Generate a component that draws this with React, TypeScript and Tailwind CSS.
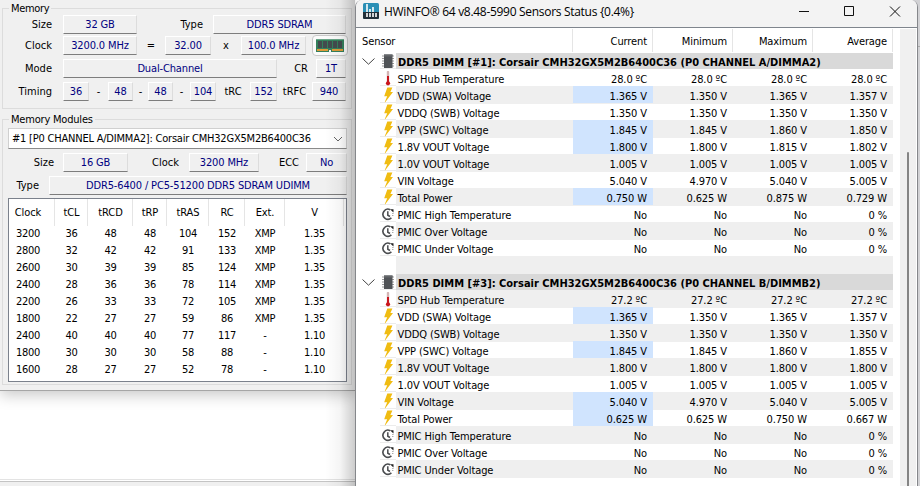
import type { ReactNode } from "react";

const timings = [
    ["3200", "36", "48", "48", "104", "152", "XMP", "1.35"],
    ["2800", "32", "42", "42", "91", "133", "XMP", "1.35"],
    ["2600", "30", "39", "39", "85", "124", "XMP", "1.35"],
    ["2400", "28", "36", "36", "78", "114", "XMP", "1.35"],
    ["2200", "26", "33", "33", "72", "105", "XMP", "1.35"],
    ["1800", "22", "27", "27", "59", "86", "XMP", "1.35"],
    ["2400", "40", "40", "40", "77", "117", "-", "1.10"],
    ["1800", "30", "30", "30", "58", "88", "-", "1.10"],
    ["1600", "28", "27", "27", "52", "78", "-", "1.10"],
];

const timingCols = "grid grid-cols-[46px_33px_45px_34px_42px_36px_40px_59px]";

type Sensor = {
    kind: "group" | "temp" | "volt" | "clock" | "blank";
    name: string;
    values?: string[];
    changed?: boolean;
};

const sensors: Sensor[] = [
    { kind: "group", name: "DDR5 DIMM [#1]: Corsair CMH32GX5M2B6400C36 (P0 CHANNEL A/DIMMA2)" },
    { kind: "temp", name: "SPD Hub Temperature", values: ["28.0 ºC", "28.0 ºC", "28.0 ºC", "28.0 ºC"] },
    { kind: "volt", name: "VDD (SWA) Voltage", values: ["1.365 V", "1.350 V", "1.365 V", "1.357 V"], changed: true },
    { kind: "volt", name: "VDDQ (SWB) Voltage", values: ["1.350 V", "1.350 V", "1.350 V", "1.350 V"] },
    { kind: "volt", name: "VPP (SWC) Voltage", values: ["1.845 V", "1.845 V", "1.860 V", "1.850 V"], changed: true },
    { kind: "volt", name: "1.8V VOUT Voltage", values: ["1.800 V", "1.800 V", "1.815 V", "1.802 V"], changed: true },
    { kind: "volt", name: "1.0V VOUT Voltage", values: ["1.005 V", "1.005 V", "1.005 V", "1.005 V"] },
    { kind: "volt", name: "VIN Voltage", values: ["5.040 V", "4.970 V", "5.040 V", "5.005 V"] },
    { kind: "volt", name: "Total Power", values: ["0.750 W", "0.625 W", "0.875 W", "0.729 W"], changed: true },
    { kind: "clock", name: "PMIC High Temperature", values: ["No", "No", "No", "0 %"] },
    { kind: "clock", name: "PMIC Over Voltage", values: ["No", "No", "No", "0 %"] },
    { kind: "clock", name: "PMIC Under Voltage", values: ["No", "No", "No", "0 %"] },
    { kind: "blank", name: "" },
    { kind: "group", name: "DDR5 DIMM [#3]: Corsair CMH32GX5M2B6400C36 (P0 CHANNEL B/DIMMB2)" },
    { kind: "temp", name: "SPD Hub Temperature", values: ["27.2 ºC", "27.2 ºC", "27.2 ºC", "27.2 ºC"] },
    { kind: "volt", name: "VDD (SWA) Voltage", values: ["1.365 V", "1.350 V", "1.365 V", "1.357 V"], changed: true },
    { kind: "volt", name: "VDDQ (SWB) Voltage", values: ["1.350 V", "1.350 V", "1.350 V", "1.350 V"] },
    { kind: "volt", name: "VPP (SWC) Voltage", values: ["1.845 V", "1.845 V", "1.860 V", "1.855 V"], changed: true },
    { kind: "volt", name: "1.8V VOUT Voltage", values: ["1.800 V", "1.800 V", "1.800 V", "1.800 V"] },
    { kind: "volt", name: "1.0V VOUT Voltage", values: ["1.005 V", "1.005 V", "1.005 V", "1.005 V"] },
    { kind: "volt", name: "VIN Voltage", values: ["5.040 V", "4.970 V", "5.040 V", "5.005 V"], changed: true },
    { kind: "volt", name: "Total Power", values: ["0.625 W", "0.625 W", "0.750 W", "0.667 W"], changed: true },
    { kind: "clock", name: "PMIC High Temperature", values: ["No", "No", "No", "0 %"] },
    { kind: "clock", name: "PMIC Over Voltage", values: ["No", "No", "No", "0 %"] },
    { kind: "clock", name: "PMIC Under Voltage", values: ["No", "No", "No", "0 %"] },
];

const Field = ({ className, children }: { className: string; children: ReactNode }) => (
    <div className={`h-[19px] shrink-0 border border-t-white border-l-white border-r-[#dcdcdc] border-b-[#7d7d7d] text-center leading-[17px] tracking-[-0.14px] text-[#000080] ${className}`}>
        {children}
    </div>
);

const Label = ({ className, children }: { className: string; children: ReactNode }) => (
    <div className={`shrink-0 leading-[20px] ${className}`}>{children}</div>
);

const RamIcon = () => (
    <svg width="28" height="15" viewBox="0 0 28 15">
        <path d="M0 1h28v13H0z" fill="#34805c" />
        <path d="M0 1h28v1H0z" fill="#69a688" />
        <path d="M2 3h4v7H2zM7 3h4v7H7zM12 3h4v7h-4zM17 3h4v7h-4zM22 3h4v7h-4z" fill="#434b4e" />
        <path d="M1 11h11v2H1zM16 11h11v2H16z" fill="#dd9a38" />
        <path d="M13 12h2v3h-2z" fill="#f4f4f4" />
    </svg>
);

const ChipIcon = () => (
    <svg width="12" height="15" viewBox="0 0 12 15">
        <path d="M0 2h12M0 4.5h12M0 7h12M0 9.5h12M0 12h12" stroke="#999" />
        <path d="M2 0.5h8.5v13.5H2z" fill="#505357" />
        <path d="M2 0.5h8.5v2H2z" fill="#64676a" />
    </svg>
);

const TempIcon = () => (
    <svg width="6" height="15" viewBox="0 0 6 15">
        <path d="M3 1v11" stroke="#d3b4b4" strokeWidth="2.4" strokeLinecap="round" />
        <path d="M3 5v7" stroke="#c9161d" strokeWidth="2" />
        <circle cx="3" cy="12.3" r="2.1" fill="#c9161d" />
    </svg>
);

const BoltIcon = () => (
    <svg width="9" height="16" viewBox="0 0 9 16">
        <path d="M3.3 0.5H8.4L6.4 5H9L1.2 15.3H0.7L3.2 9.2H0.2z" fill="#f0bc12" />
    </svg>
);

const ClockIcon = () => (
    <svg width="12" height="13" viewBox="0 0 12 13" fill="none">
        <path d="M8.2 1.7A5 5 0 1 0 9.4 9.9" stroke="#4b4d50" strokeWidth="1.6" />
        <path d="M5.8 3.2v4l2.2 1.3" stroke="#4b4d50" strokeWidth="1.5" />
        <path d="M8 1.3h3.5v3.2z" fill="#222" />
        <path d="M10.9 5v.9M10.8 7v.9" stroke="#777" />
    </svg>
);

const icons = {
    group: <ChipIcon />,
    temp: <TempIcon />,
    volt: <BoltIcon />,
    clock: <ClockIcon />,
    blank: null,
};

const SensorRow = ({ row, shaded }: { row: Sensor; shaded: boolean }) => {
    const group = row.kind === "group";
    return (
        <div className="flex h-[17px]">
            <div className="flex w-[24px] shrink-0 items-center justify-center pt-px pl-px">
                {group && (
                    <svg width="13" height="7" viewBox="0 0 13 7" fill="none">
                        <path d="M0.5 0.5l6 5.7 6-5.7" stroke="#444" />
                    </svg>
                )}
            </div>
            <div className={`flex w-[16px] shrink-0 items-center justify-center pt-[2px] ${row.kind === "blank" ? "" : "border-b border-[#ececec]"}`}>
                {icons[row.kind]}
            </div>
            {group ? (
                <div className="mt-px h-[16px] w-[497px] bg-[#d9d9d9] pl-[2px] leading-[20px] font-bold whitespace-nowrap">{row.name}</div>
            ) : (
                <div className={`flex h-[18px] w-[497px] leading-[22px] tracking-[-0.1px] ${shaded ? "bg-[#efefef]" : ""}`}>
                    <div className="w-[177px] pl-[1.5px]">{row.name}</div>
                    {row.values?.map((value, i) => (
                        <div key={i} className={`h-[17px] w-[80px] pr-[6px] text-right ${i === 0 && row.changed ? "bg-[#d0e4fe]" : ""}`}>
                            {value}
                        </div>
                    ))}
                </div>
            )}
        </div>
    );
};

const MemoryWindow = () => (
    <div className="absolute top-0 left-0 h-[391px] w-[356px] border-b border-[#a6a6a6] bg-[#f0f0f0] pt-[2px] pl-[2px] shadow-[0_4px_14px_rgba(0,0,0,0.22)]">
        {/* Memory */}
        <fieldset className="h-[107px] w-[350px] border border-[#dcdcdc]">
            <legend className="ml-[6px] h-[12px] px-[2px] leading-[13px] tracking-[-0.35px]">Memory</legend>
            <div className="flex flex-col gap-[4px] pt-px">
                <div className="flex h-[19px]">
                    <Label className="w-[60px] pr-[11px] text-right">Size</Label>
                    <Field className="w-[74px]">32 GB</Field>
                    <Label className="w-[76px] pr-[10px] text-right">Type</Label>
                    <Field className="w-[133px]">DDR5 SDRAM</Field>
                </div>
                <div className="-mt-[2px] flex h-[19px]">
                    <Label className="w-[60px] pr-[11px] text-right">Clock</Label>
                    <Field className="w-[74px]">3200.0 MHz</Field>
                    <Label className="w-[28px] text-center">=</Label>
                    <Field className="w-[46px]">32.00</Field>
                    <Label className="w-[30px] text-center">x</Label>
                    <Field className="w-[65px]">100.0 MHz</Field>
                    <div className="-mt-px ml-[6px] flex h-[21px] w-[36px] items-center justify-center rounded-[4px] border border-[#c9c9c9] bg-[#fbfbfb]">
                        <RamIcon />
                    </div>
                </div>
                <div className="flex h-[19px]">
                    <Label className="w-[60px] pr-[11px] text-right">Mode</Label>
                    <Field className="w-[214px]">Dual-Channel</Field>
                    <Label className="w-[39px] pr-[8px] text-right">CR</Label>
                    <Field className="w-[30px]">1T</Field>
                </div>
                <div className="flex h-[19px]">
                    <Label className="w-[60px] pr-[11px] text-right">Timing</Label>
                    <Field className="w-[26px]">36</Field>
                    <Label className="w-[19px] text-center">-</Label>
                    <Field className="w-[25px]">48</Field>
                    <Label className="w-[15px] text-center">-</Label>
                    <Field className="w-[25px]">48</Field>
                    <Label className="w-[17px] text-center">-</Label>
                    <Field className="w-[26px]">104</Field>
                    <Label className="w-[34px] text-center">tRC</Label>
                    <Field className="w-[27px]">152</Field>
                    <Label className="w-[35px] text-center">tRFC</Label>
                    <Field className="w-[34px]">940</Field>
                </div>
            </div>
        </fieldset>

        {/* Memory Modules */}
        <fieldset className="mt-[4px] h-[272px] w-[350px] border border-[#dcdcdc]">
            <legend className="ml-[6px] h-[12px] px-[2px] leading-[13px] tracking-[-0.2px]">Memory Modules</legend>
            <div className="pl-[5px]">
                <div className="mt-[3px] flex h-[21px] w-[339px] items-center justify-between border border-[#d0d0d0] border-b-[#8a8a8a] bg-white pr-[3px] pl-[3px]">
                    <span className="pt-[2px] tracking-[-0.21px]">#1 [P0 CHANNEL A/DIMMA2]: Corsair CMH32GX5M2B6400C36</span>
                    <svg width="10" height="6" viewBox="0 0 10 6" fill="none">
                        <path d="M1 1l4 4 4-4" stroke="#666" />
                    </svg>
                </div>
                <div className="mt-[4px] flex h-[19px]">
                    <Label className="w-[55px] pr-[9px] text-right">Size</Label>
                    <Field className="w-[65px]">16 GB</Field>
                    <Label className="w-[61px] pr-[10px] text-right">Clock</Label>
                    <Field className="w-[70px]">3200 MHz</Field>
                    <Label className="w-[47px] pr-[7px] text-right">ECC</Label>
                    <Field className="w-[41px]">No</Field>
                </div>
                <div className="mt-[4px] flex h-[19px]">
                    <Label className="w-[41px] pr-[10px] text-right">Type</Label>
                    <Field className="w-[298px]">DDR5-6400 / PC5-51200 DDR5 SDRAM UDIMM</Field>
                </div>
                <div className="mt-[3px] h-[184px] w-[339px] border border-[#7b818c] bg-white">
                    <div className={`${timingCols} h-[26px] text-center leading-[27px] tracking-[-0.1px]`}>
                        {["Clock", "tCL", "tRCD", "tRP", "tRAS", "RC", "Ext.", "V"].map((head) => (
                            <div key={head} className="border-r border-[#e5e5e5] pl-[1px] first:pr-[7px] first:pl-0">
                                {head}
                            </div>
                        ))}
                    </div>
                    {timings.map((row, r) => (
                        <div key={r} className={`${timingCols} h-[17px] text-center leading-[18px] tracking-[-0.3px]`}>
                            {row.map((cell, c) => (
                                <div key={c} className="first:pr-[8px]">{cell}</div>
                            ))}
                        </div>
                    ))}
                </div>
            </div>
        </fieldset>
    </div>
);

const SensorsWindow = () => (
    <div className="absolute top-0 left-[355px] h-[500px] w-[563px] overflow-hidden rounded-t-[7px] border-x border-[#85878b] bg-white">
        {/* Title bar */}
        <div className="flex h-[27px] items-start bg-[#f3f3f3] pt-[3px] pl-[7px]">
            <svg width="16" height="16" viewBox="0 0 16 16" className="shrink-0">
                <rect width="16" height="16" rx="1.5" fill="#2b8fb5" />
                <path d="M0 9h16v5.5a1.5 1.5 0 0 1-1.5 1.5h-13A1.5 1.5 0 0 1 0 14.500z" fill="#22303a" />
                <path d="M4 1v8M7 6v3M10 4v5" stroke="#fff" strokeWidth="1.6" />
                <path d="M4 10v4M7 10v4M10 10v4M13 10v4" stroke="#fff" strokeWidth="1.6" />
            </svg>
            <div className="ml-[5px] font-['Open_Sans',sans-serif] text-[12px] leading-[18px] tracking-[-0.3px] whitespace-nowrap">HWiNFO® 64 v8.48-5990 Sensors Status {"{0.4%}"}</div>
            <svg width="102" height="12" viewBox="0 0 102 12" fill="none" stroke="#111" className="mt-[2px] mr-[16px] ml-auto shrink-0">
                <path d="M0 6.500h10M45.500 1.500h9v9h-9zM91 1.500l10 10M101 1.500l-10 10" />
            </svg>
        </div>
        <div className="flex border-t border-[#7f858d]">
            <div className="w-[537px]">
                <div className="flex h-[24px] pt-px leading-[25px] tracking-[-0.1px]">
                    <div className="w-[217px] border-r border-[#e5e5e5] pl-[6px]">Sensor</div>
                    <div className="w-[80px] border-r border-[#e5e5e5] pr-[5px] text-right">Current</div>
                    <div className="w-[80px] border-r border-[#e5e5e5] pr-[5px] text-right">Minimum</div>
                    <div className="w-[80px] border-r border-[#e5e5e5] pr-[5px] text-right">Maximum</div>
                    <div className="w-[80px] border-r border-[#e5e5e5] pr-[5px] text-right">Average</div>
                </div>
                {sensors.map((row, i) => (
                    <SensorRow key={i} row={row} shaded={i % 2 === 0} />
                ))}
            </div>
            {/* Scrollbar */}
            <div className="mt-px ml-[7px] h-[470px] w-[16px] bg-[#f0f0f0] pt-[123px] pl-[7px]">
                <div className="h-full w-[2px] rounded-full bg-[#858585]" />
            </div>
        </div>
    </div>
);

const App = () => {
    return (
        <div className="relative h-[486px] w-[920px] overflow-hidden bg-white font-['DejaVu_Sans_Condensed','DejaVu_Sans',sans-serif] text-[11px] text-black">
            {/* Desktop area below the memory window */}
            <div className="flex h-full flex-col justify-end">
                <div className="h-[7px] border-t border-[#e3e3e3] pt-px">
                    <div className="h-full border-t border-[#c4c4c4] bg-[#f0f0f0]" />
                </div>
            </div>
            <MemoryWindow />
            {/* Shadow cast by the sensors window */}
            <div className="absolute top-0 left-[325px] h-full w-[30px] bg-linear-to-r from-transparent via-black/4 to-black/20" />
            <div className="absolute top-0 right-0 h-full w-[10px] bg-[#d2d2d5]">
                <div className="h-[47px] border-b border-[#aaa]" />
            </div>
            <SensorsWindow />
        </div>
    );
};

export default App;
